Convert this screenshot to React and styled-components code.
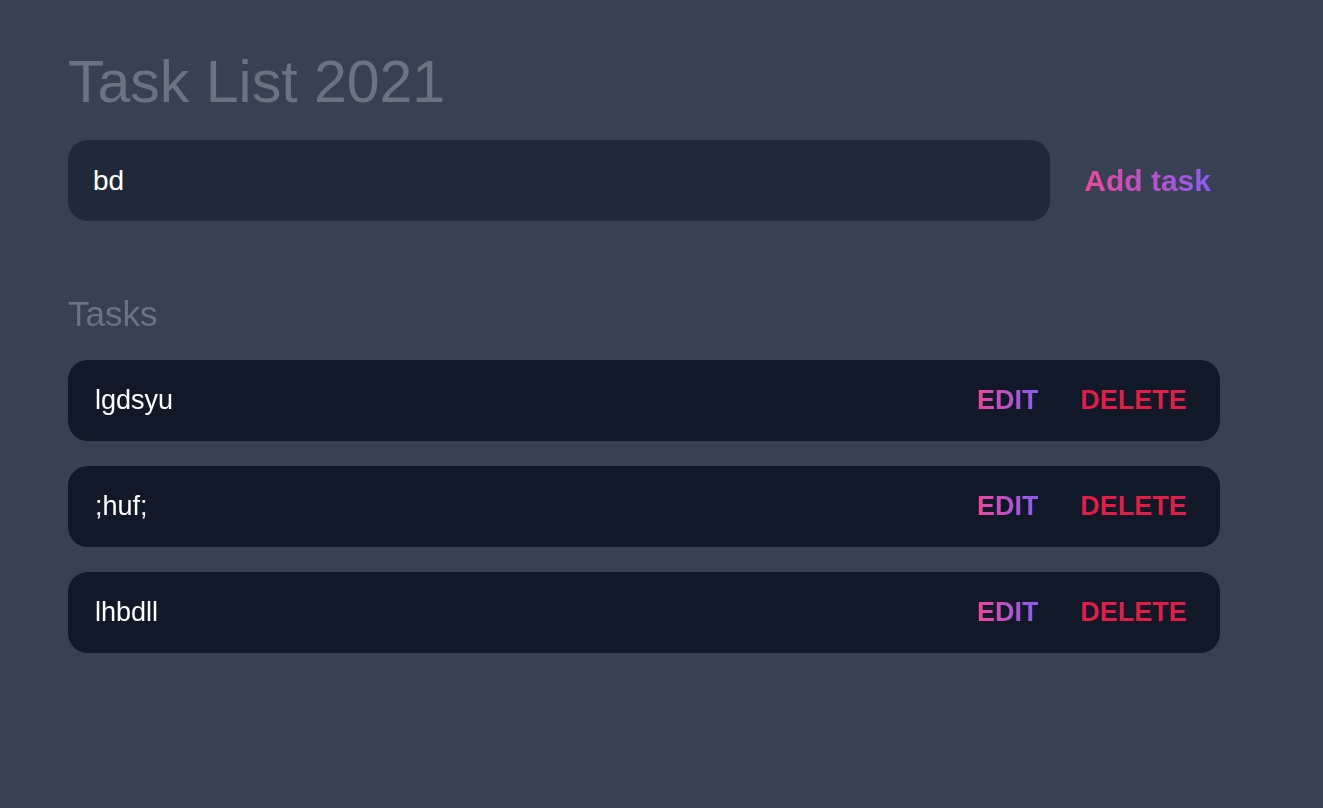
import React, { useState } from 'react';
import styled, { createGlobalStyle } from 'styled-components';

const GlobalStyle = createGlobalStyle`
  html, body {
    margin: 0;
    padding: 0;
    background: #374151;
    font-family: "Liberation Sans", Arial, sans-serif;
  }
  * {
    box-sizing: border-box;
  }
`;

const Page = styled.main`
  min-height: 808px;
  background: #374151;
  padding: 53px 68px 0;
`;

const Title = styled.h1`
  margin: 0 0 28px;
  font-size: 59px;
  line-height: 1;
  font-weight: 400;
  color: #6b7280;
`;

const Form = styled.form`
  display: flex;
  align-items: center;
  width: 1152px;
`;

const Input = styled.input`
  flex: 1;
  height: 81px;
  min-width: 0;
  border: none;
  outline: none;
  border-radius: 20px;
  background: #1f2937;
  padding: 0 25px;
  font-family: inherit;
  font-size: 28px;
  color: #fff;
  caret-color: #fff;
`;

const GradientText = styled.span`
  display: inline-block;
  background: linear-gradient(to right, #ec4899, #8b5cf6);
  -webkit-background-clip: text;
  background-clip: text;
  color: transparent;
`;

const AddButton = styled.button`
  border: none;
  background: none;
  padding: 0 9px 0 34px;
  font-family: inherit;
  font-size: 30px;
  font-weight: 700;
  cursor: pointer;
`;

const Heading = styled.h2`
  margin: 75px 0 29px;
  font-size: 35px;
  line-height: 1;
  font-weight: 400;
  color: #6b7280;
`;

const List = styled.ul`
  list-style: none;
  margin: 0;
  padding: 0;
  width: 1152px;
  display: flex;
  flex-direction: column;
  gap: 25px;
`;

const Row = styled.li`
  display: flex;
  align-items: center;
  justify-content: space-between;
  height: 81px;
  padding: 0 33px 0 27px;
  border-radius: 20px;
  background: #111827;
  color: #fff;
  font-size: 27px;
`;

const Actions = styled.div`
  display: flex;
  align-items: center;
  gap: 42px;
`;

const ActionButton = styled.button`
  border: none;
  background: none;
  padding: 0;
  font-family: inherit;
  font-size: 27px;
  font-weight: 700;
  text-transform: uppercase;
  color: ${(p) => (p.$danger ? '#e11d48' : 'inherit')};
  cursor: pointer;
`;

const initialTasks = ['lgdsyu', ';huf;', 'lhbdll'];

const App = () => {
  const [value, setValue] = useState('bd');
  const [tasks] = useState(initialTasks);

  return (
    <Page>
      <GlobalStyle />
      <Title>Task List 2021</Title>
      <Form onSubmit={(e) => e.preventDefault()}>
        <Input autoFocus value={value} onChange={(e) => setValue(e.target.value)} />
        <AddButton type="submit">
          <GradientText>Add task</GradientText>
        </AddButton>
      </Form>
      <Heading>Tasks</Heading>
      <List>
        {tasks.map((task) => (
          <Row key={task}>
            <span>{task}</span>
            <Actions>
              <ActionButton>
                <GradientText>Edit</GradientText>
              </ActionButton>
              <ActionButton $danger>Delete</ActionButton>
            </Actions>
          </Row>
        ))}
      </List>
    </Page>
  );
};

export default App;
